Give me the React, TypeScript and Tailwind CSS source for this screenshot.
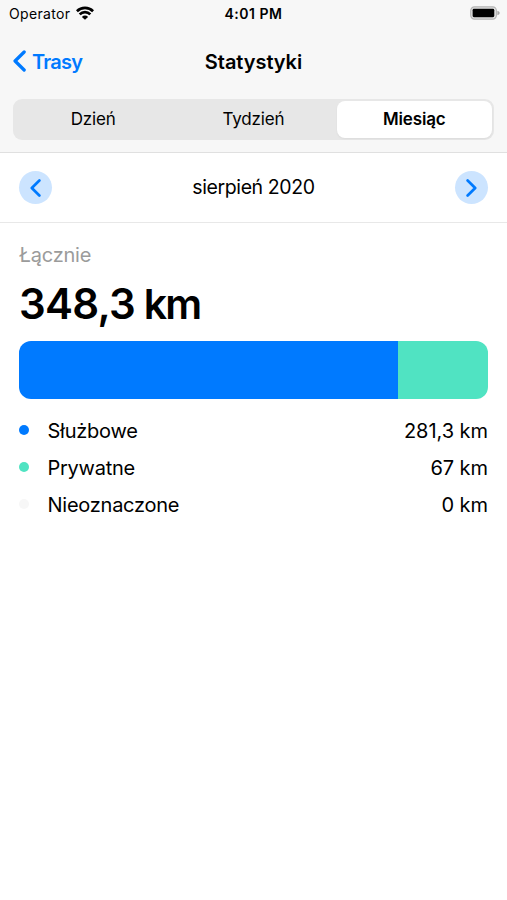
const tabs = ["Dzień", "Tydzień", "Miesiąc"];

const categories = [
  { name: "Służbowe", value: 281.3, color: "bg-[#007aff]" },
  { name: "Prywatne", value: 67, color: "bg-[#50e3c2]" },
  { name: "Nieoznaczone", value: 0, color: "bg-[#f7f7f7]" },
];

const formatNumber = (value: number) => String(value).replace(".", ",");

function StatusBar() {
  return (
    <div className="grid h-[27px] grid-cols-3 items-center pl-[9px] pr-[7px] text-[14px]">
      <div className="flex items-center gap-[6px]">
        <span className="tracking-[0.35px]">Operator</span>
        <svg className="mb-px h-[14px] w-[18px]" viewBox="0 0 18 14" fill="none" stroke="currentColor" strokeWidth="2.7">
          <path d="M0.9 5.2a11.5 11.5 0 0 1 16.2 0" />
          <path d="M3.7 8.4a7.4 7.4 0 0 1 10.6 0" />
          <path d="M9 13.8 5.9 10.9a4.2 4.2 0 0 1 6.2 0Z" fill="currentColor" stroke="none" />
        </svg>
      </div>
      <span className="-ml-[2px] text-center font-semibold tracking-[0.5px]">4:01 PM</span>
      <svg className="mb-px h-[14px] w-[30px] justify-self-end" viewBox="0 0 31 14">
        <rect x="0.75" y="0.75" width="26.5" height="12.5" rx="3.8" fill="#e3e3e3" stroke="#b3b3b3" strokeWidth="1.2" />
        <rect x="2.7" y="2.7" width="22.4" height="8.6" rx="1.4" fill="#000" />
        <path d="M28.3 4.7c1.7.6 2.3 1.3 2.3 2.3s-.6 1.7-2.3 2.3Z" fill="#a6a6a6" />
      </svg>
    </div>
  );
}

function Chevron({ className, direction }: { className: string; direction: "left" | "right" }) {
  return (
    <svg className={className} viewBox="0 0 12 20" fill="none" stroke="currentColor" strokeWidth="3" strokeLinecap="round" strokeLinejoin="round">
      <path d={direction === "left" ? "M10.3 1.7 1.9 10l8.4 8.3" : "M1.7 1.7 10.1 10l-8.4 8.3"} />
    </svg>
  );
}

function App() {
  const total = categories.reduce((sum, item) => sum + item.value, 0);

  return (
    <div className="min-h-[900px] bg-white font-['Inter','Liberation_Sans',sans-serif] text-black">
      <header className="h-[153px] border-b border-[#e0e0e0] bg-[#f7f7f7]">
        <StatusBar />

        <div className="grid h-[72px] grid-cols-3 items-center px-[13px] pb-[2px]">
          <button className="flex items-center gap-[6px] text-[20px] font-semibold tracking-[-0.75px] text-[#007aff]">
            <Chevron className="mb-[2px] h-[22px] w-[13px]" direction="left" />
            Trasy
          </button>
          <h1 className="text-center text-[20px] font-semibold tracking-[-0.05px]">Statystyki</h1>
        </div>

        <div className="mx-[13px] grid h-[41px] grid-cols-3 rounded-[9px] bg-[#e7e7e7] py-[2px]">
          {tabs.map((tab) => (
            <button key={tab} className={`rounded-lg pt-px text-[17px] tracking-[-0.15px] ${tab === "Miesiąc" ? "ml-[3px] mr-[2px] bg-white font-semibold shadow-xs" : ""}`}>{tab}</button>
          ))}
        </div>
      </header>

      <div className="flex h-[70px] items-center justify-between border-b border-[#e8e8e8] px-[19px] text-[#007aff]">
        <button className="flex size-[33px] items-center justify-center rounded-full bg-[#cce4ff]" aria-label="Poprzedni miesiąc">
          <Chevron className="mr-[1px] h-[18px] w-[11px]" direction="left" />
        </button>
        <span className="text-[19.5px] tracking-[-0.4px] text-black">sierpień 2020</span>
        <button className="flex size-[33px] items-center justify-center rounded-full bg-[#cce4ff]" aria-label="Następny miesiąc">
          <Chevron className="h-[18px] w-[11px]" direction="right" />
        </button>
      </div>

      <main className="px-[19px] pt-[17px]">
        <p className="text-[20px] leading-[30px] tracking-[-0.2px] text-[#9b9b9b]">Łącznie</p>
        <p className="mt-[9px] h-[50px] text-[42px] leading-[50px] font-semibold tracking-[-0.75px]">
          {formatNumber(total)} <span className="-ml-[1px] text-[41px] tracking-[-2px]">km</span>
        </p>

        <div className="mt-[12px] flex h-[58px] overflow-hidden rounded-xl">
          {categories.map((item) => (
            <div key={item.name} className={item.color} style={{ width: `${(item.value / total) * 100}%` }} />
          ))}
        </div>

        <ul className="mt-[13px] text-[20px]">
          {categories.map((item) => (
            <li key={item.name} className="flex h-[37px] items-center">
              <span className={`mr-[18.5px] mb-px size-[10px] rounded-full ${item.color}`} />
              <span className="tracking-[-0.25px]">{item.name}</span>
              <span className="ml-auto tracking-[-0.05px]">{formatNumber(item.value)} km</span>
            </li>
          ))}
        </ul>
      </main>
    </div>
  );
}

export default App;
